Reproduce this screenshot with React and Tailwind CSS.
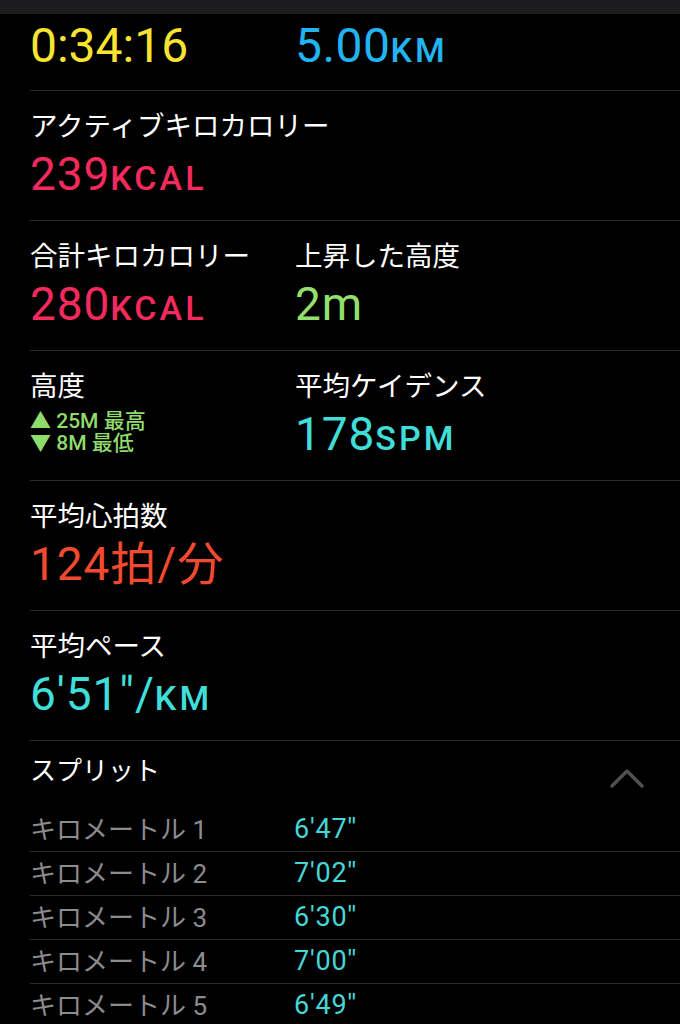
import React from 'react';

const LINE = 'border-b border-[#2b2b2d]';

// 上段の2列ブロック
const Label = ({ children }) => (
  <div className="h-[27px] text-[27.5px] leading-[27px] text-white whitespace-nowrap">{children}</div>
);

const Value = ({ color, children }) => (
  <div className={`mt-[11px] h-[46px] text-[46px] leading-[46px] tracking-[0.02em] ${color} whitespace-nowrap`}>{children}</div>
);

const Unit = ({ children }) => (
  <span className="text-[34px] leading-none tracking-[0.09em] font-medium">{children}</span>
);

const Section = ({ children, cols = false }) => (
  <div className={`${LINE} pt-[22px] pb-[23px] ${cols ? 'grid grid-cols-[265px_1fr]' : ''}`}>
    {children}
  </div>
);

const splits = [
  { km: 1, pace: `6'47''` },
  { km: 2, pace: `7'02''` },
  { km: 3, pace: `6'30''` },
  { km: 4, pace: `7'00''` },
  { km: 5, pace: `6'49''` },
];

const App = () => {
  return (
    <div className="min-h-screen bg-black font-['Roboto','Noto_Sans_CJK_JP',sans-serif]">
      {/* ステータスバーの下の帯 */}
      <div className="h-[14px] bg-[#1c1c1e]"></div>

      <div className="pl-[30px]">
        {/* 時間・距離 */}
        <div className={`${LINE} grid grid-cols-[265px_1fr] pt-[8px] pb-[20px]`}>
          <div className="h-[48px] text-[48px] leading-[48px] text-[#f8e431]">0:34:16</div>
          <div className="h-[48px] text-[48px] leading-[48px] tracking-[0.01em] text-[#22b4f1]">
            5.00<Unit>KM</Unit>
          </div>
        </div>

        <Section>
          <Label>アクティブキロカロリー</Label>
          <Value color="text-[#f42a5d]">239<Unit>KCAL</Unit></Value>
        </Section>

        <Section cols>
          <div>
            <Label>合計キロカロリー</Label>
            <Value color="text-[#f42a5d]">280<Unit>KCAL</Unit></Value>
          </div>
          <div>
            <Label>上昇した高度</Label>
            <Value color="text-[#92e06b]">2m</Value>
          </div>
        </Section>

        <Section cols>
          <div>
            <Label>高度</Label>
            <div className="mt-[10px] text-[21px] leading-[22px] font-medium text-[#8fdc6c]">
              <div className="h-[22px] whitespace-nowrap">▲ 25M 最高</div>
              <div className="h-[22px] whitespace-nowrap">▼ 8M 最低</div>
            </div>
          </div>
          <div>
            <Label>平均ケイデンス</Label>
            <Value color="text-[#40ded9]">178<Unit>SPM</Unit></Value>
          </div>
        </Section>

        <Section>
          <Label>平均心拍数</Label>
          <Value color="text-[#f14a30]">124拍/分</Value>
        </Section>

        <Section>
          <Label>平均ペース</Label>
          <Value color="text-[#40ded9]">6'51"/<Unit>KM</Unit></Value>
        </Section>

        {/* スプリット */}
        <div className="flex items-start justify-between pt-[17px] pb-[20px] pr-[36px]">
          <div className="h-[26px] text-[26px] leading-[26px] text-white">スプリット</div>
          <svg width="34" height="20" viewBox="0 0 34 20" className="mt-[10px]">
            <polyline points="2,18 17,3 32,18" fill="none" stroke="#505052" strokeWidth="3.5" strokeLinecap="round" strokeLinejoin="round" />
          </svg>
        </div>

        {splits.map((s) => (
          <div key={s.km} className={`${LINE} h-[44px] grid grid-cols-[264px_1fr] items-center`}>
            <div className="h-[26px] text-[26px] leading-[26px] text-[#8c8c8e] whitespace-nowrap">キロメートル {s.km}</div>
            <div className="h-[27px] text-[27px] leading-[27px] tracking-[0.03em] text-[#47d6d6]">{s.pace}</div>
          </div>
        ))}
      </div>
    </div>
  );
};

export default App;
